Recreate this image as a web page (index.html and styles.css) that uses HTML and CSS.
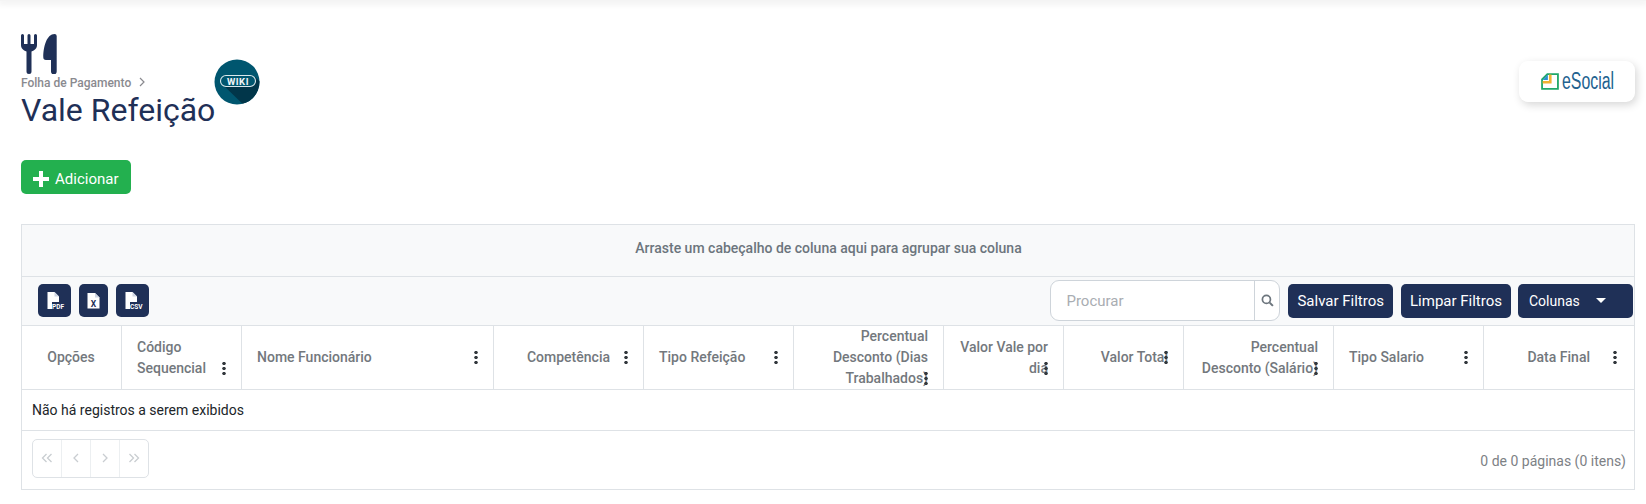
FILE: index.html
```html
<!DOCTYPE html>
<html lang="pt-BR">
<head>
<meta charset="utf-8">
<title>Vale Refeição</title>
<link rel="stylesheet" href="styles.css">
</head>
<body>
<div class="topshade"></div>
<main class="page">
  <header class="head">
    <div class="head-left">
      <svg class="utensils" viewBox="0 0 36 40" width="36" height="40"><path d="M0 1.500a1.500 1.500 0 0 1 3 0V10h3.500V1.500a1.500 1.500 0 0 1 3 0V10H13V1.500a1.500 1.500 0 0 1 3 0V11c0 3.500-2.200 5.200-5.500 6.500v20a2.500 2.500 0 0 1-5 0v-20C2.200 16.200 0 14.500 0 11z"/><path d="M35.700 2v35.500a2.800 2.800 0 0 1-5.700 0V26h-5q-2.700 0-2.700-2.700C22.300 12 26 0 33.500 0q2.200 0 2.200 2z"/></svg>
      <div class="crumb">Folha de Pagamento<span class="crumb-sep"><svg viewBox="0 0 8 10" width="8" height="10"><path d="M2 1l4 4-4 4"/></svg></span></div>
      <h1 class="title">Vale Refeição</h1>
      <svg class="wiki" viewBox="0 0 46 46" width="46" height="46">
        <defs><clipPath id="wc"><circle cx="23" cy="23" r="22.500"/></clipPath></defs>
        <circle cx="23" cy="23" r="22.500" fill="#00566f"/>
        <path clip-path="url(#wc)" d="M8 25l26 25 20-20-13-12z" fill="#01364a"/>
        <rect x="6.500" y="16.500" width="35" height="11" rx="5.500" fill="#00566f" stroke="#dbe8ec" stroke-width="1.100"/>
        <text x="24" y="25.500" text-anchor="middle" class="wiki-text">WIKI</text>
      </svg>
    </div>
    <div class="esocial">
      <svg viewBox="0 0 17 16" width="18" height="17"><path d="M6 1h10v14H1V6z" fill="#fff" stroke="#1fa869" stroke-width="1.700"/><path d="M1.500 6.500L6.500 1.500v5z" fill="#2b8fd0"/><path d="M1.500 7.500h6v-6h2.500v8.500H1.500z" fill="#f0b232"/></svg>
      <span class="esocial-text">eSocial</span>
    </div>
  </header>

  <button class="add"><svg viewBox="0 0 16 16" width="16" height="16"><path d="M6 0h4v6h6v4h-6v6H6v-6H0V6h6z" fill="#fff"/></svg>Adicionar</button>

  <section class="grid">
    <div class="group">Arraste um cabeçalho de coluna aqui para agrupar sua coluna</div>
    <div class="toolbar">
      <div class="exports">
        <button class="exp"><svg viewBox="0 0 33 33" width="33" height="33"><path d="M9.500 8h7l4.500 4.500V18h-7v7H9.500z" fill="#fff"/><path d="M16.500 8v4.500H21z" fill="#cfd6e4"/><text x="14" y="24.500" class="exp-label">PDF</text></svg></button>
        <button class="exp narrow"><svg viewBox="0 0 29 33" width="29" height="33"><path d="M8.500 9h7.500l4.500 4.500V24.500H8.500z" fill="#fff"/><path d="M16 9v4.500h4.500z" fill="#cfd6e4"/><text x="14.500" y="23" text-anchor="middle" class="exp-x">X</text></svg></button>
        <button class="exp"><svg viewBox="0 0 33 33" width="33" height="33"><path d="M9.500 8h7l4.500 4.500V18h-7v7H9.500z" fill="#fff"/><path d="M16.500 8v4.500H21z" fill="#cfd6e4"/><text x="14" y="24.500" class="exp-label">CSV</text></svg></button>
      </div>
      <div class="tools">
        <div class="search">
          <span class="search-input">Procurar</span>
          <span class="search-btn"><svg viewBox="0 0 12 12" width="13" height="13"><circle cx="5" cy="5" r="3.700" fill="none" stroke="#6c757d" stroke-width="1.600"/><path d="M8 8l3 3" stroke="#6c757d" stroke-width="1.800"/></svg></span>
        </div>
        <button class="tool">Salvar Filtros</button>
        <button class="tool">Limpar Filtros</button>
        <button class="tool cols">Colunas<span class="caret"></span></button>
      </div>
    </div>
    <div class="thead">
      <div class="th center"><span>Opções</span></div>
      <div class="th"><span>Código Sequencial<span class="dots"></span></span></div>
      <div class="th"><span>Nome Funcionário<span class="dots"></span></span></div>
      <div class="th end pad-33"><span>Competência<span class="dots"></span></span></div>
      <div class="th"><span>Tipo Refeição<span class="dots"></span></span></div>
      <div class="th end"><span>Percentual Desconto (Dias Trabalhados)<span class="dots"></span></span></div>
      <div class="th end tight"><span>Valor Vale por dia<span class="dots"></span></span></div>
      <div class="th end"><span>Valor Total<span class="dots"></span></span></div>
      <div class="th end"><span>Percentual Desconto (Salário)<span class="dots"></span></span></div>
      <div class="th"><span>Tipo Salario<span class="dots"></span></span></div>
      <div class="th end pad-44"><span>Data Final<span class="dots"></span></span></div>
    </div>
    <div class="empty">Não há registros a serem exibidos</div>
    <div class="pager">
      <div class="pages">
        <span class="pg"><svg viewBox="0 0 12 12" width="12" height="12"><path d="M5.500 2L1.500 6l4 4M10.500 2l-4 4 4 4"/></svg></span>
        <span class="pg"><svg viewBox="0 0 12 12" width="12" height="12"><path d="M8 2L4 6l4 4"/></svg></span>
        <span class="pg"><svg viewBox="0 0 12 12" width="12" height="12"><path d="M4 2l4 4-4 4"/></svg></span>
        <span class="pg"><svg viewBox="0 0 12 12" width="12" height="12"><path d="M1.500 2l4 4-4 4M6.500 2l4 4-4 4"/></svg></span>
      </div>
      <span class="info">0 de 0 páginas (0 itens)</span>
    </div>
  </section>
</main>
</body>
</html>
```
FILE: styles.css
```css
* { box-sizing: border-box; }
html, body { margin: 0; height: 504px; overflow: hidden; background: #fff; }
body { font-family: Roboto, "Liberation Sans", sans-serif; font-size: 14px; color: #212529; }
button { font-family: inherit; border: 0; cursor: pointer; }

.topshade { height: 1px; background: #f4f4f4; box-shadow: 0 1px 6px 2px rgba(0,0,0,.07); }

.page { padding: 33px 11px 0 21px; }

.head { display: flex; justify-content: space-between; align-items: flex-start; height: 126px; }
.head-left { position: relative; width: 240px; }
.utensils { display: block; fill: #1f3057; margin-bottom: 1px; }
.crumb { font-size: 12px; font-weight: 500; line-height: 16px; color: #8a8a8f; white-space: nowrap; }
.crumb-sep { margin-left: 7px; }
.crumb-sep svg { fill: none; stroke: #8a8a8f; stroke-width: 1.200; }
.title { margin: 0; font-size: 32px; font-weight: 400; line-height: 38px; color: #1f3057; white-space: nowrap; }
.wiki { position: absolute; left: 193px; top: 25px; }
.wiki-text { font: 700 9.500px Roboto, sans-serif; fill: #f2f7f9; letter-spacing: .5px; }

.esocial { display: flex; align-items: center; gap: 3px; width: 116px; height: 41px; margin-top: 27px; padding-left: 22px; background: #fff; border-radius: 9px; box-shadow: 2px 3px 8px rgba(0,0,0,.16); }
.esocial svg { flex: none; }
.esocial-text { width: 52px; font-family: "Liberation Sans", sans-serif; font-size: 23px; color: #22628f; transform: scaleX(.69); transform-origin: left center; }

.add { display: flex; align-items: center; gap: 6px; width: 110px; height: 34px; padding: 4px 0 0 12px; background: #23b04f; color: #fff; border-radius: 5px; font-size: 15px; }

.grid { margin-top: 30px; width: 1614px; border: 1px solid #dee2e6; }
.group { height: 52px; display: flex; align-items: center; justify-content: center; padding: 0 0 5px 1px; background: #f8f9fa; border-bottom: 1px solid #dee2e6; color: #6c757d; font-weight: 500; font-size: 14px; }

.toolbar { display: flex; justify-content: space-between; align-items: center; height: 49px; padding: 0 1px 1px 16px; background: #f8f9fa; border-bottom: 1px solid #dee2e6; }
.exports { display: flex; gap: 8px; }
.exp { display: flex; width: 33px; height: 33px; padding: 0; background: #1f3057; border-radius: 5px; }
.exp.narrow { width: 29px; }
.exp-label { font: 700 6.500px Roboto, sans-serif; fill: #fff; }
.exp-x { font: 700 8.500px Roboto, sans-serif; fill: #1f3057; }

.tools { display: flex; align-items: center; gap: 8px; }
.search { display: flex; width: 230px; height: 41px; background: #fff; border: 1px solid #ced4da; border-radius: 9px; }
.search-input { flex: 1; display: flex; align-items: center; padding-left: 15px; color: #a9adb2; font-size: 15px; }
.search-btn { display: flex; align-items: center; justify-content: center; width: 25px; border-left: 1px solid #ced4da; }
.tool { height: 34px; padding: 0 9px; background: #1f3057; color: #fff; border-radius: 5px; font-size: 15px; white-space: nowrap; }
.cols { display: flex; align-items: center; justify-content: space-between; width: 115px; margin-left: -1px; padding: 0 27px 0 11px; font-size: 14px; }
.caret { width: 0; height: 0; border: 5px solid transparent; border-top-color: #fff; border-bottom: 0; }

.thead { display: grid; grid-template-columns: 100px 120px 252px 150px 150px 150px 120px 120px 150px 150px 1fr; height: 64px; border-bottom: 1px solid #dee2e6; }
.th { position: relative; display: flex; align-items: center; padding: 0 16px 0 15px; border-right: 1px solid #dee2e6; color: #73787d; font-weight: 500; font-size: 14px; line-height: 21px; }
.th:last-child { border-right: 0; }
.th.center { justify-content: center; }
.th.end { justify-content: flex-end; text-align: right; padding-right: 15px; }
.th.tight { padding-left: 10px; }
.th.pad-33 { padding-right: 33px; }
.th.pad-44 { padding-right: 44px; }
.th.pad-44 .dots { right: 17px; }
.dots { position: absolute; right: 15px; width: 4px; height: 14px; margin-top: 3px; background: radial-gradient(circle, #33383d 1.400px, transparent 2px) 0 0 / 4px 5px repeat-y; }
.empty { height: 41px; display: flex; align-items: center; padding-left: 10px; border-bottom: 1px solid #dee2e6; font-size: 14px; }

.pager { display: flex; justify-content: space-between; align-items: center; height: 58px; padding: 0 8px 0 10px; }
.pages { display: flex; width: 117px; height: 39px; margin-bottom: 4px; border: 1px solid #dee2e6; border-radius: 5px; }
.pg { flex: 1; display: flex; align-items: center; justify-content: center; border-left: 1px solid #eceff1; }
.pg:first-child { border-left: 0; }
.pg svg { fill: none; stroke: #c9cdd1; stroke-width: 1.300; }
.info { margin-top: 2px; color: #7d8185; font-size: 14px; }
```
